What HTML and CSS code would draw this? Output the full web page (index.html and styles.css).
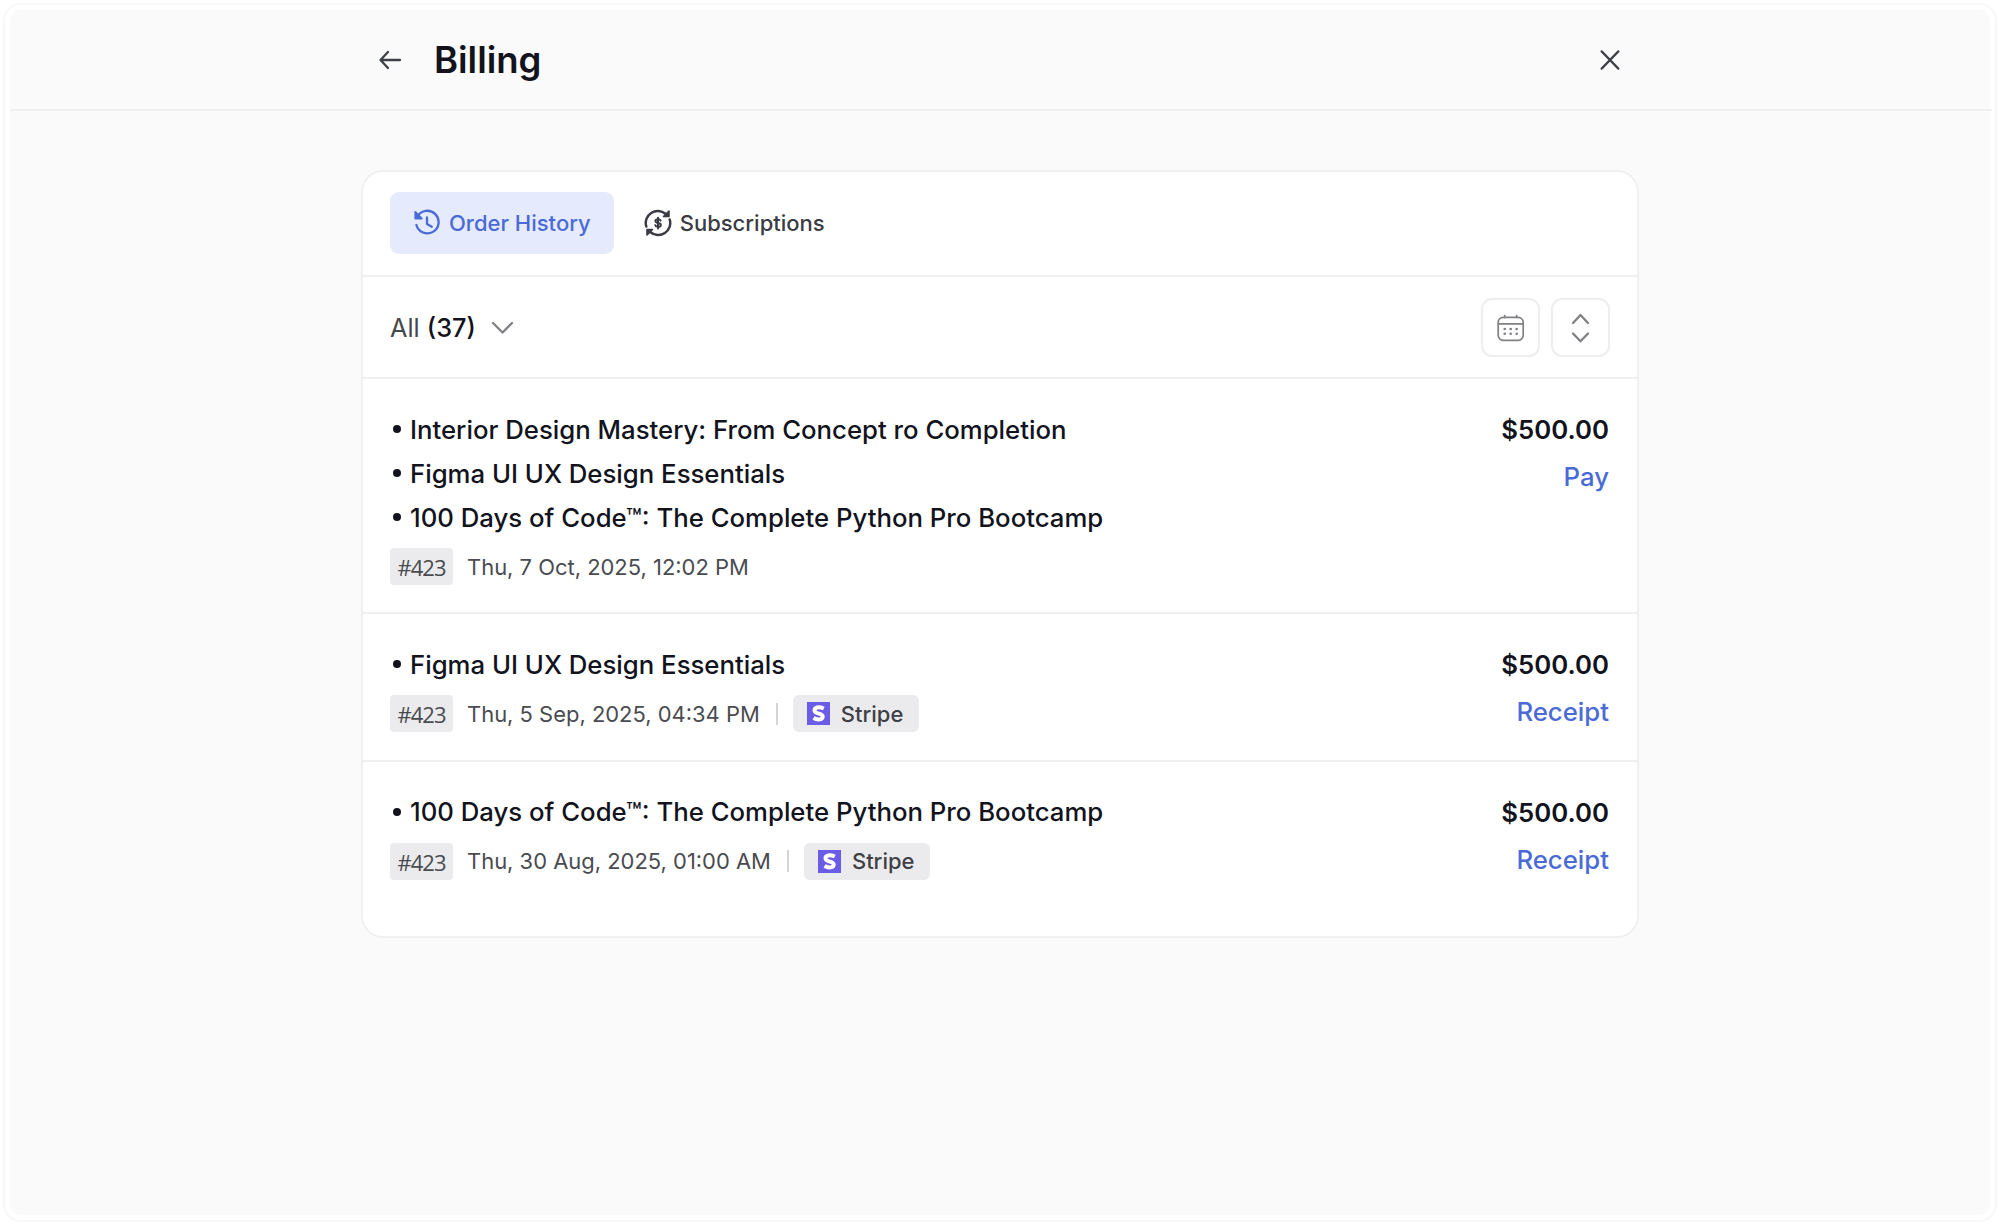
FILE: index.html
```html
<!DOCTYPE html>
<html lang="en">
<head>
  <meta charset="utf-8" />
  <meta name="viewport" content="width=device-width, initial-scale=1" />
  <title>Billing</title>
  <link rel="stylesheet" href="styles.css">
</head>
<body>
  <div class="frame">
    <div class="page">
      <header class="header">
        <div class="header-inner">
          <a class="back" href="#" aria-label="Back">
            <svg width="24" height="20" viewBox="0 0 24 20" fill="none" stroke="currentColor" stroke-width="2.300" stroke-linecap="round" stroke-linejoin="round"><path d="M22 10H2.500M10 2L2.500 10l7.500 8" /></svg>
          </a>
          <h1>Billing</h1>
          <a class="close" href="#" aria-label="Close">
            <svg width="20" height="20" viewBox="0 0 20 20" fill="none" stroke="currentColor" stroke-width="2.500" stroke-linecap="round"><path d="M1.800 1.500l16.400 17M18.200 1.500l-16.400 17" /></svg>
          </a>
        </div>
      </header>

      <main class="card">
        <nav class="tabs">
          <a class="tab active" href="#">
            <svg width="28" height="28" viewBox="0 0 28 28" fill="none" stroke="currentColor" stroke-width="2.300" stroke-linecap="round" stroke-linejoin="round">
              <path fill="currentColor" stroke-width="1.800" d="M2.300 3v6.500h6.400z" />
              <path d="M4.500 7.500A11.300 11.300 0 1 1 3.400 16" />
              <path d="M14 8.500V15l4.800 2.700" />
            </svg>
            <span>Order History</span>
          </a>
          <a class="tab" href="#">
            <svg width="28" height="28" viewBox="0 0 28 28" fill="none" stroke="currentColor" stroke-width="2.500" stroke-linecap="round" stroke-linejoin="round">
              <path d="M2.300 17.500A12 12 0 0 1 21.500 4.800" />
              <path fill="currentColor" stroke-width="1.600" d="M25 2v5.500h-5.500z" />
              <path d="M25.700 10.500A12 12 0 0 1 6.500 23.200" />
              <path fill="currentColor" stroke-width="1.600" d="M3 26v-5.500h5.500z" />
              <path stroke-width="2" d="M16.600 11.700c-.4-.9-1.300-1.400-2.600-1.400-1.500 0-2.600.7-2.600 1.800 0 2.700 5.400 1.200 5.400 3.800 0 1.200-1.200 1.900-2.800 1.900-1.300 0-2.400-.5-2.800-1.600M14 8.700v10.700" />
            </svg>
            <span>Subscriptions</span>
          </a>
        </nav>

        <div class="toolbar">
          <div class="filter">
            <span>All <b>(37)</b></span>
            <svg width="23" height="14" viewBox="0 0 23 14" fill="none" stroke="currentColor" stroke-width="2.300" stroke-linecap="round" stroke-linejoin="round"><path d="M2 2l9.500 9.500L21 2" /></svg>
          </div>
          <div class="actions">
            <button class="icon-btn" aria-label="Date">
              <svg width="28" height="28" viewBox="0 0 28 28" fill="none" stroke="currentColor" stroke-width="1.700" stroke-linecap="round">
                <rect x="1.200" y="3.300" width="25" height="23" rx="5" />
                <path d="M1.600 9.800h24.500M7.700 1.500v2M19.700 1.500v2" />
                <path stroke-width="2.600" d="M7.700 15h.01M13.700 15h.01M19.700 15h.01M7.700 19.800h.01M13.700 19.800h.01M19.700 19.800h.01" />
              </svg>
            </button>
            <button class="icon-btn" aria-label="Sort">
              <svg width="20" height="30" viewBox="0 0 20 30" fill="none" stroke="currentColor" stroke-width="2.300" stroke-linecap="round" stroke-linejoin="round"><path d="M2 10l7.500-8 7.500 8M2 20.500l7.500 7.800 7.500-7.800" /></svg>
            </button>
          </div>
        </div>

        <section class="order">
          <div class="details">
            <div class="item"><i class="dot"></i>Interior Design Mastery: From Concept ro Completion</div>
            <div class="item"><i class="dot"></i>Figma UI UX Design Essentials</div>
            <div class="item"><i class="dot"></i>100 Days of Code™: The Complete Python Pro Bootcamp</div>
            <div class="meta">
              <span class="number">#423</span>
              <span class="date">Thu, 7 Oct, 2025, 12:02 PM</span>
            </div>
          </div>
          <div class="payment">
            <div class="amount">$500.00</div>
            <a class="link" href="#">Pay</a>
          </div>
        </section>

        <section class="order">
          <div class="details">
            <div class="item"><i class="dot"></i>Figma UI UX Design Essentials</div>
            <div class="meta">
              <span class="number">#423</span>
              <span class="date">Thu, 5 Sep, 2025, 04:34 PM</span>
              <span class="divider"></span>
              <span class="method">
                <svg width="23" height="23" viewBox="0 0 23 23"><path fill="#6b5ce7" d="M0 0h23v23H0z" /><path fill="none" stroke="#fff" stroke-width="4" d="M16.800 6.500C11.500 4.200 7.500 5.400 7.500 8.300c0 4.200 8.200 2.600 8.200 6.300 0 3-4.700 3.900-9.200 1.500" /></svg>
                <span>Stripe</span>
              </span>
            </div>
          </div>
          <div class="payment">
            <div class="amount">$500.00</div>
            <a class="link" href="#">Receipt</a>
          </div>
        </section>

        <section class="order">
          <div class="details">
            <div class="item"><i class="dot"></i>100 Days of Code™: The Complete Python Pro Bootcamp</div>
            <div class="meta">
              <span class="number">#423</span>
              <span class="date">Thu, 30 Aug, 2025, 01:00 AM</span>
              <span class="divider"></span>
              <span class="method">
                <svg width="23" height="23" viewBox="0 0 23 23"><path fill="#6b5ce7" d="M0 0h23v23H0z" /><path fill="none" stroke="#fff" stroke-width="4" d="M16.800 6.500C11.500 4.200 7.500 5.400 7.500 8.300c0 4.200 8.200 2.600 8.200 6.300 0 3-4.700 3.900-9.200 1.500" /></svg>
                <span>Stripe</span>
              </span>
            </div>
          </div>
          <div class="payment">
            <div class="amount">$500.00</div>
            <a class="link" href="#">Receipt</a>
          </div>
        </section>
      </main>
    </div>
  </div>
</body>
</html>
```

FILE: styles.css
```css
* {
  box-sizing: border-box;
}
body {
  margin: 0;
  padding: 3px 2px 3px 3px;
  height: 100vh;
  background-color: #fff;
  color: #12131c;
  font-family: Inter, "Liberation Sans", sans-serif;
}
a {
  color: inherit;
  text-decoration: none;
}
svg {
  display: block;
  flex: none;
}
.frame {
  height: 1219px;
  padding: 5px;
  border: 2px solid #f8f8f8;
  border-radius: 18px;
}
.page {
  height: 100%;
  background-color: #fafafa;
  border-radius: 10px;
}
.header {
  height: 101px;
  margin-right: -2px;
  border-bottom: 2px solid #f0f0f0;
}
.header-inner {
  display: flex;
  align-items: center;
  width: 1242px;
  height: 100%;
  margin-left: 368px;
}
.back,
.close {
  color: #3f4046;
}
h1 {
  margin: 0 auto 0 32px;
  font-size: 36.500px;
  font-weight: 600;
  line-height: 48px;
}
.card {
  width: 1278px;
  height: 768px;
  margin: 59px auto 0;
  background-color: #fff;
  border: 2px solid #f0f0f0;
  border-radius: 22px;
}
.tabs {
  display: flex;
  gap: 7px;
  height: 105px;
  padding: 20px 27px;
  border-bottom: 2px solid #f0f0f0;
}
.tab {
  display: flex;
  align-items: center;
  gap: 8px;
  height: 62px;
  padding: 0 23px;
  border-radius: 9px;
  color: #3b3c43;
  font-size: 22px;
  font-weight: 500;
}
.tab span {
  padding-bottom: 1px;
}
.tab.active {
  background-color: #e5eafc;
  color: #4a6bd6;
}
.toolbar {
  display: flex;
  align-items: center;
  justify-content: space-between;
  height: 102px;
  padding: 1px 27px 0;
  border-bottom: 2px solid #f0f0f0;
}
.filter {
  display: flex;
  align-items: center;
  gap: 15px;
  color: #47484d;
  font-size: 25.300px;
}
.filter b {
  color: #12131c;
  font-weight: 500;
}
.filter svg {
  color: #808085;
}
.actions {
  display: flex;
  gap: 11px;
}
.icon-btn {
  display: flex;
  align-items: center;
  justify-content: center;
  width: 59px;
  height: 59px;
  padding: 0;
  background-color: #fff;
  border: 2px solid #eee;
  border-radius: 11px;
  color: #808085;
}
.order {
  display: flex;
  justify-content: space-between;
  padding: 28px 28px 27.250px 27px;
  border-bottom: 2px solid #f0f0f0;
}
.order:last-child {
  border-bottom: none;
}
.item {
  display: flex;
  align-items: center;
  height: 44px;
  font-size: 25.740px;
  font-weight: 500;
}
.dot {
  width: 8px;
  height: 8px;
  margin: 0 9px 0 3px;
  border-radius: 50%;
  background-color: #12131c;
}
.meta {
  display: flex;
  align-items: center;
  height: 37px;
  margin-top: 9px;
}
.number {
  width: 63px;
  height: 37px;
  background-color: #ebebed;
  border-radius: 4px;
  color: #4a4b50;
  font-family: "Open Sans", "Noto Sans", sans-serif;
  font-size: 22px;
  letter-spacing: -1px;
  line-height: 38px;
  text-align: center;
}
.date {
  margin-left: 14px;
  color: #4a4b50;
  font-size: 21.950px;
}
.divider {
  width: 2px;
  height: 22px;
  margin: 0 15px 0 16px;
  background-color: #d5d5d8;
}
.method {
  display: flex;
  align-items: center;
  gap: 11px;
  height: 37px;
  padding: 0 16px 0 14px;
  background-color: #ebebed;
  border-radius: 6px;
  color: #3f4046;
  font-size: 22px;
  font-weight: 500;
}
.payment {
  padding-top: 1px;
  text-align: right;
}
.amount {
  height: 44px;
  font-size: 25.750px;
  font-weight: 600;
  line-height: 44px;
}
.link {
  display: block;
  margin-top: 5px;
  color: #4a6bd6;
  font-size: 25.750px;
  font-weight: 500;
  line-height: 40px;
}
```
